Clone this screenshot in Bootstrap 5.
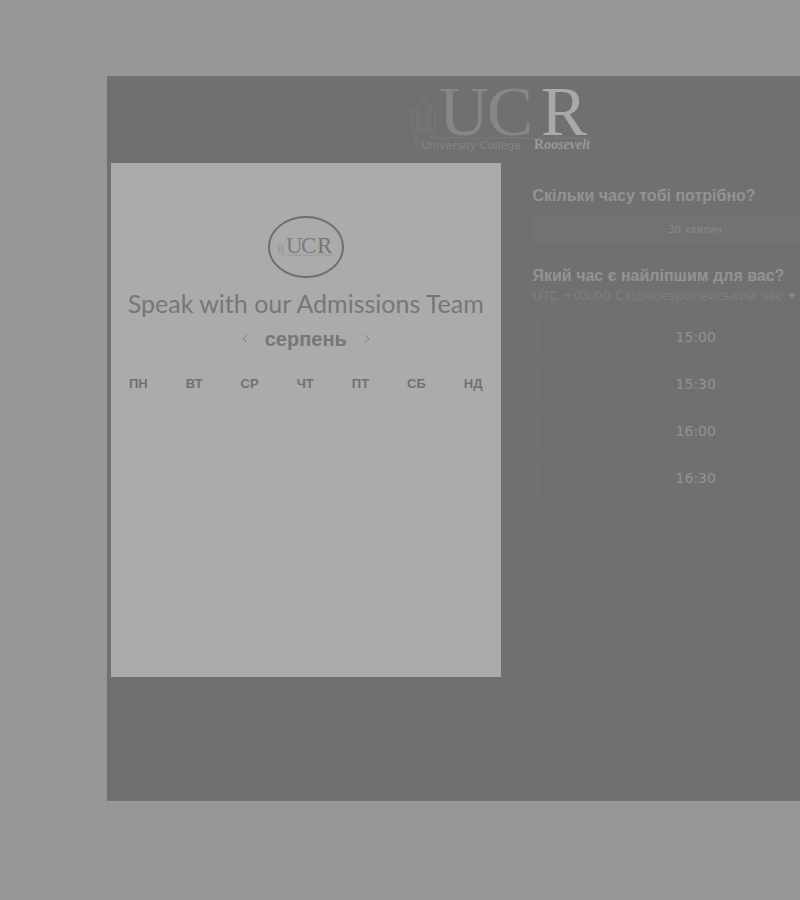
<!DOCTYPE html>
<html lang="uk">
<head>
<meta charset="utf-8">
<meta name="viewport" content="width=device-width, initial-scale=1">
<title>University College Roosevelt</title>
<link href="https://cdn.jsdelivr.net/npm/bootstrap@5.3.0/dist/css/bootstrap.min.css" rel="stylesheet">
<style>
body{background:#969696;color:#909090;font-family:"DejaVu Sans",sans-serif;overflow-x:hidden}
.scheduler{margin:76px 0 98px 107px;min-width:788px;background:#707070;padding:0 4px 123px;border:1px solid #747474;border-left:0}
.brand-bar{height:86px}
.calendar-side{background:#ababab;color:#777;min-height:514px;padding:52px 18px}
.slots-side{padding:22px 32px;border-top:1px solid #727272;border-bottom:1px solid #767676}
.team-title{font:400 25px/28px "Lato",sans-serif;white-space:nowrap;margin:10px 0 0;color:#777}
.month{font:700 20px/24px "Liberation Sans",sans-serif;color:#777}
.month-nav{margin-top:10px}
.chev{background:none;border:0;padding:0;color:#828282;line-height:0}
.week th{font:700 13px/16px "Liberation Sans",sans-serif;color:#727272;padding:0}
.week{margin-top:25px}
.ask{font:700 16px/20px "Liberation Sans",sans-serif;color:#939393;margin:0;white-space:nowrap}
.length-btn{font-size:10px;line-height:24px;height:26px;color:#898989;background:#727272;border:1px solid #767676;border-radius:3px;padding:0;margin:11px 0 23px}
.zone-btn{font-size:13px;line-height:20px;color:#7e7e7e;padding:0;border:0;background:none;white-space:nowrap}
.slot-list{gap:6px;padding:0 3px 0 4px;margin-top:10px}
.slot{font:400 14px/38px "DejaVu Sans",sans-serif;height:41px;color:#939393;background:none;border:1px solid #757575;border-radius:2px;padding:0}
</style>
</head>
<body>
<main class="scheduler">
<header class="brand-bar d-flex justify-content-center">
<svg width="184" height="80" viewBox="0 0 184 80" overflow="visible" role="img" aria-label="University College Roosevelt">
<path fill="none" stroke="#7b7b7b" d="M15 15v7M9 34v-4l6-8 6 8v5M3 33v19l3 3 2-3V35l-2-3zM11 35v19l4-2 3 2V35l-3 3zM21 33v19l3 3 2-3V34l-2-2zM7 55v17M21 55v6h160"/>
<g font-family="Liberation Serif,serif" font-size="69"><text x="30" y="58" fill="#878787">U</text><text x="78" y="58" fill="#878787">C</text><text x="132" y="58" fill="#a9a9a9">R</text></g>
<text x="12" y="72" fill="#858585" font-family="DejaVu Sans,sans-serif" font-size="11">University College</text>
<text x="125" y="72" fill="#999" font-family="Liberation Serif,serif" font-size="14" font-weight="700">R<tspan font-style="italic">oosevelt</tspan></text>
</svg>
</header>
<div class="row g-0">
<section class="col-6 calendar-side d-flex flex-column align-items-center">
<svg width="78" height="64" viewBox="0 0 78 64" role="img" aria-label="UCR">
<ellipse cx="39" cy="32" rx="37" ry="30" fill="none" stroke="#707070" stroke-width="2"/>
<g font-family="Liberation Serif,serif" font-size="23" fill="#7d7d7d"><text x="19" y="38">U</text><text x="34" y="38">C</text><text x="50" y="38" fill="#777">R</text></g>
<path d="M13 26v3M11 31h6M11 33h6M11 35h6M11 37h6M12 30v9M16 30v9" stroke="#999" fill="none"/>
<path d="M14 40h52" stroke="#959595" stroke-dasharray="6 1 3 1" fill="none"/>
</svg>
<h1 class="team-title">Speak with our Admissions Team</h1>
<div class="month-nav d-flex align-items-center justify-content-center gap-3">
<button class="chev" type="button" aria-label="Попередній місяць"><svg width="8" height="10" viewBox="0 0 8 10"><path d="M6 1L2 5l4 3" fill="none" stroke="currentColor"/></svg></button>
<span class="month">серпень</span>
<button class="chev" type="button" aria-label="Наступний місяць"><svg width="8" height="10" viewBox="0 0 8 10"><path d="M2 1l4 4-4 3" fill="none" stroke="currentColor"/></svg></button>
</div>
<table class="week w-100"><thead><tr class="d-flex justify-content-between"><th scope="col">ПН</th><th scope="col">ВТ</th><th scope="col">СР</th><th scope="col">ЧТ</th><th scope="col">ПТ</th><th scope="col">СБ</th><th scope="col">НД</th></tr></thead></table>
</section>
<section class="col-6 slots-side">
<h2 class="ask">Скільки часу тобі потрібно?</h2>
<button class="length-btn w-100 d-block" type="button">30 хвилин</button>
<h2 class="ask">Який час є найліпшим для вас?</h2>
<button class="zone-btn d-flex align-items-center gap-1" type="button">UTC +03:00 Східноєвропейський час <svg width="10" height="6" viewBox="0 0 10 6"><path d="M1 1h8L5 5z" fill="#8c8c8c"/></svg></button>
<div class="slot-list d-flex flex-column">
<button class="slot" type="button">15:00</button><button class="slot" type="button">15:30</button><button class="slot" type="button">16:00</button><button class="slot" type="button">16:30</button>
</div>
</section>
</div>
</main>
<script src="https://cdn.jsdelivr.net/npm/bootstrap@5.3.0/dist/js/bootstrap.bundle.min.js"></script>
</body>
</html>
